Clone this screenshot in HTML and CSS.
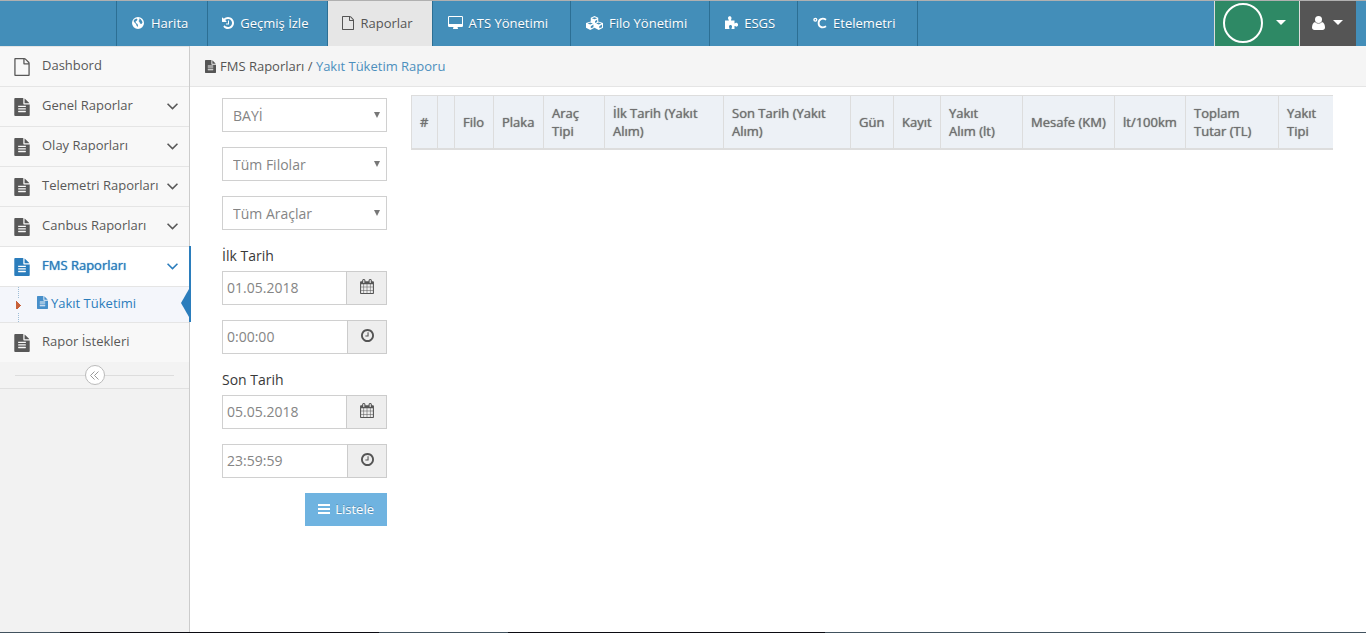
FILE: index.html
```html
<!DOCTYPE html>
<html lang="tr">
<head>
<meta charset="utf-8">
<title>Yakıt Tüketim Raporu</title>
<link rel="stylesheet" href="styles.css">
</head>
<body>
<svg class="sprite" aria-hidden="true">
  <symbol id="file-o" viewBox="128 0 1536 1792"><path d="M1596 380q28 28 48 76t20 88v1152q0 40-28 68t-68 28h-1344q-40 0-68-28t-28-68v-1600q0-40 28-68t68-28h896q40 0 88 20t76 48zm-444-244v376h376q-10-29-22-41l-313-313q-12-12-41-22zm384 1528v-1024h-416q-40 0-68-28t-28-68v-416h-768v1536h1280z"/></symbol>
  <symbol id="file" viewBox="128 0 1536 1792"><path d="M1596 476q14 14 28 36h-472v-472q22 14 36 28zm-476 164h544v1056q0 40-28 68t-68 28h-1344q-40 0-68-28t-28-68v-1600q0-40 28-68t68-28h800v544q0 40 28 68t68 28zm160 736v-64q0-14-9-23t-23-9h-704q-14 0-23 9t-9 23v64q0 14 9 23t23 9h704q14 0 23-9t9-23zm0-256v-64q0-14-9-23t-23-9h-704q-14 0-23 9t-9 23v64q0 14 9 23t23 9h704q14 0 23-9t9-23zm0-256v-64q0-14-9-23t-23-9h-704q-14 0-23 9t-9 23v64q0 14 9 23t23 9h704q14 0 23-9t9-23z"/></symbol>
  <symbol id="calendar" viewBox="64 0 1664 1792"><path d="M192 1664h288v-288h-288v288zm352 0h320v-288h-320v288zm-352-352h288v-320h-288v320zm352 0h320v-320h-320v320zm-352-384h288v-288h-288v288zm736 736h320v-288h-320v288zm-384-736h320v-288h-320v288zm768 736h288v-288h-288v288zm-384-352h320v-320h-320v320zm-352-864v-288q0-13-9.500-22.500t-22.500-9.500h-64q-13 0-22.500 9.500t-9.500 22.500v288q0 13 9.500 22.500t22.500 9.500h64q13 0 22.500-9.500t9.500-22.500zm736 864h288v-320h-288v320zm-384-384h320v-288h-320v288zm384 0h288v-288h-288v288zm32-480v-288q0-13-9.500-22.500t-22.500-9.500h-64q-13 0-22.500 9.500t-9.500 22.500v288q0 13 9.500 22.500t22.500 9.500h64q13 0 22.500-9.500t9.500-22.500zm384-64v1280q0 52-38 90t-90 38h-1408q-52 0-90-38t-38-90v-1280q0-52 38-90t90-38h128v-96q0-66 47-113t113-47h64q66 0 113 47t47 113v96h384v-96q0-66 47-113t113-47h64q66 0 113 47t47 113v96h128q52 0 90 38t38 90z"/></symbol>
  <symbol id="clock" viewBox="128 128 1536 1536"><path d="M1024 544v448q0 14-9 23t-23 9h-320q-14 0-23-9t-9-23v-64q0-14 9-23t23-9h224v-352q0-14 9-23t23-9h64q14 0 23 9t9 23zm416 352q0-148-73-273t-198-198-273-73-273 73-198 198-73 273 73 273 198 198 273 73 273-73 198-198 73-273zm224 0q0 209-103 385.500t-279.500 279.500-385.500 103-385.500-103-279.500-279.500-103-385.500 103-385.500 279.500-279.500 385.500-103 385.500 103 279.500 279.500 103 385.500z"/></symbol>
  <symbol id="history" viewBox="128 128 1536 1536"><path d="M1664 896q0 156-61 298t-164 245-245 164-298 61q-172 0-327-72.500t-264-204.500q-7-10-6.500-22.500t8.500-20.500l137-138q10-9 25-9 16 2 23 12 73 95 179 147t225 52q104 0 198.500-40.500t163.500-109.500 109.500-163.500 40.500-198.500-40.500-198.500-109.500-163.500-163.500-109.500-198.500-40.500q-98 0-188 35.500t-160 101.500l137 138q31 30 14 69-17 40-59 40h-448q-26 0-45-19t-19-45v-448q0-42 40-59 39-17 69 14l130 129q107-101 244.500-156.500t284.500-55.500q156 0 298 61t245 164 164 245 61 298zm-640-288v448q0 14-9 23t-23 9h-320q-14 0-23-9t-9-23v-64q0-14 9-23t23-9h224v-352q0-14 9-23t23-9h64q14 0 23 9t9 23z"/></symbol>
  <symbol id="desktop" viewBox="-64 0 1920 1664"><path d="M1728 992v-832q0-32-32-32h-1600q-32 0-32 32v832q0 32 32 32h1600q32 0 32-32zm128-832v1088q0 160-160 160h-544q0 37 16 77t32 71 16 44q0 64-64 64h-512q-64 0-64-64 0-14 16-44t32-70 16-78h-544q-160 0-160-160v-1088q0-160 160-160h1600q160 0 160 160z"/></symbol>
  <symbol id="globe" viewBox="0 0 24 24"><path fill-rule="evenodd" d="M12 0a12 12 0 1 0 0 24a12 12 0 1 0 0-24zM14 3l3 1 3 4 1 3-2 3-3-1-1-3-2-2 2-2zM5 5l4-2 2 2-2 3-2 1 1 3 3 2 1 3-1 3-2-3-1-3-3-3-2-3z"/></symbol>
  <symbol id="cubes" viewBox="0 0 32 26"><path fill-rule="evenodd" d="M16 0l7 3v7l9 3v9l-8 4-8-4-8 4-8-4v-9l9-3V3zM11 4l5 2 5-2-5-2zM17 9v4l4-2V7zM3 14l5 2 5-2-5-2zM9 19v4l5-2v-5zM19 14l5 2 5-2-5-2zM25 19v4l5-2v-5z"/></symbol>
  <symbol id="puzzle" viewBox="0 0 26 26"><path d="M0 9h8C7 7 6 6 6 4c0-5 7-5 7 0 0 2-1 3-1 5h7v6c2 0 3-2 5-1 3 1 3 6 0 7-2 1-3-1-5-1v6h-6c0-2 1-3 1-5 0-4-6-4-6 0 0 2 1 3 1 5H0z"/></symbol>
  <symbol id="celsius" viewBox="0 0 30 24"><circle cx="5" cy="5" r="3" fill="none" stroke="currentColor" stroke-width="3"/><path d="M28 5C20 0 12 4 12 12s7 12 16 7" fill="none" stroke="currentColor" stroke-width="4"/></symbol>
  <symbol id="user" viewBox="0 0 26 28"><path d="M6 12c-4 1-6 6-6 11 0 3 2 5 5 5h16c3 0 5-2 5-5 0-5-2-10-6-11-4 4-10 4-14 0z"/><circle cx="13" cy="7" r="7"/></symbol>
  <symbol id="bars" viewBox="0 0 12 10"><path d="M0 0h12v2H0zM0 4h12v2H0zM0 8h12v2H0z"/></symbol>
  <symbol id="down" viewBox="0 0 10 6"><path d="M0 1l5 5 5-5-1-1-4 4-4-4z"/></symbol>
  <symbol id="caret" viewBox="0 0 10 5"><path d="M0 0h10l-5 5z"/></symbol>
</svg>

<header class="navbar">
  <nav class="tabs">
    <a class="tab mid" href="#"><svg class="icon i12"><use href="#globe"/></svg>Harita</a>
    <a class="tab" href="#"><svg class="icon i12"><use href="#history"/></svg>Geçmiş İzle</a>
    <a class="tab active" href="#"><svg class="icon i12 tall"><use href="#file-o"/></svg>Raporlar</a>
    <a class="tab roomy" href="#"><svg class="icon i15"><use href="#desktop"/></svg>ATS Yönetimi</a>
    <a class="tab roomy" href="#"><svg class="icon i16"><use href="#cubes"/></svg>Filo Yönetimi</a>
    <a class="tab roomy" href="#"><svg class="icon i13"><use href="#puzzle"/></svg>ESGS</a>
    <a class="tab roomy" href="#"><svg class="icon i14"><use href="#celsius"/></svg>Etelemetri</a>
  </nav>
  <div class="account">
    <button class="acct green" type="button" aria-label="Firma"><span class="avatar"></span><svg class="caret"><use href="#caret"/></svg></button>
    <button class="acct dark" type="button" aria-label="Kullanıcı"><svg class="user"><use href="#user"/></svg><svg class="caret"><use href="#caret"/></svg></button>
  </div>
</header>

<div class="page">
  <aside class="sidebar">
    <ul class="menu">
      <li><a class="item" href="#"><svg class="doc"><use href="#file-o"/></svg><span class="name">Dashbord</span></a></li>
      <li><a class="item" href="#"><svg class="doc"><use href="#file"/></svg><span class="name">Genel Raporlar</span><svg class="chev"><use href="#down"/></svg></a></li>
      <li><a class="item" href="#"><svg class="doc"><use href="#file"/></svg><span class="name">Olay Raporları</span><svg class="chev"><use href="#down"/></svg></a></li>
      <li><a class="item" href="#"><svg class="doc"><use href="#file"/></svg><span class="name">Telemetri Raporları</span><svg class="chev"><use href="#down"/></svg></a></li>
      <li><a class="item" href="#"><svg class="doc"><use href="#file"/></svg><span class="name">Canbus Raporları</span><svg class="chev"><use href="#down"/></svg></a></li>
      <li class="open"><a class="item" href="#"><svg class="doc"><use href="#file"/></svg><span class="name">FMS Raporları</span><svg class="chev"><use href="#down"/></svg></a>
        <a class="subitem" href="#"><svg class="subdoc"><use href="#file"/></svg>Yakıt Tüketimi</a></li>
      <li><a class="item" href="#"><svg class="doc"><use href="#file"/></svg><span class="name">Rapor İstekleri</span></a></li>
    </ul>
    <div class="collapse"><button class="toggle" type="button" aria-label="Menüyü daralt"><svg class="dbl" viewBox="0 0 9 9"><path d="M4 0L0 4l4 4M8 0L4 4l4 4" transform="translate(.5 .5)"/></svg></button></div>
  </aside>

  <main class="main">
    <div class="crumbs"><svg class="crumbdoc"><use href="#file"/></svg><span>FMS Raporları / <a href="#">Yakıt Tüketim Raporu</a></span></div>
    <div class="content">
      <form class="filters">
        <div class="pick"><select aria-label="Bayi"><option>BAYİ</option></select></div>
        <div class="pick"><select aria-label="Filo"><option>Tüm Filolar</option></select></div>
        <div class="pick"><select aria-label="Araç"><option>Tüm Araçlar</option></select></div>
        <div class="when">
          <label for="d1">İlk Tarih</label>
          <div class="group"><input id="d1" type="text" value="01.05.2018"><button class="addon wide" type="button" aria-label="Takvim"><svg class="cal"><use href="#calendar"/></svg></button></div>
        </div>
        <div class="group"><input type="text" aria-label="İlk saat" value="0:00:00"><button class="addon" type="button" aria-label="Saat"><svg class="clk"><use href="#clock"/></svg></button></div>
        <div class="when">
          <label for="d2">Son Tarih</label>
          <div class="group"><input id="d2" type="text" value="05.05.2018"><button class="addon wide" type="button" aria-label="Takvim"><svg class="cal"><use href="#calendar"/></svg></button></div>
        </div>
        <div class="group"><input type="text" aria-label="Son saat" value="23:59:59"><button class="addon" type="button" aria-label="Saat"><svg class="clk"><use href="#clock"/></svg></button></div>
        <button class="list" type="button"><svg class="bars"><use href="#bars"/></svg>Listele</button>
      </form>
      <div class="results">
        <table>
          <colgroup><col class="w26"><col class="w17"><col class="w39"><col class="w50"><col class="w61"><col class="w119"><col class="w127"><col class="w43"><col class="w47"><col class="w82"><col class="w92"><col class="w71"><col class="w93"><col></colgroup>
          <thead><tr><th>#</th><th></th><th>Filo</th><th>Plaka</th><th>Araç Tipi</th><th>İlk Tarih (Yakıt Alım)</th><th>Son Tarih (Yakıt Alım)</th><th>Gün</th><th>Kayıt</th><th>Yakıt<br>Alım (lt)</th><th>Mesafe (KM)</th><th>lt/100km</th><th>Toplam<br>Tutar (TL)</th><th>Yakıt Tipi</th></tr></thead>
        </table>
      </div>
    </div>
  </main>
</div>
<div class="edge"></div>
</body>
</html>
```
FILE: styles.css
```css
* { box-sizing: border-box; }
body {
  margin: 0;
  min-height: 100vh;
  display: flex;
  flex-direction: column;
  background: #fff;
  color: #393939;
  font: 13px/20px "Open Sans", sans-serif;
}
a { color: inherit; text-decoration: none; }
svg { fill: currentColor; flex: none; display: block; }
button, input, select { font-family: inherit; border-radius: 0; margin: 0; }
.sprite { position: absolute; width: 0; height: 0; }

.navbar {
  display: flex;
  justify-content: space-between;
  height: 46px;
  border-top: 1px solid #b0b0b0;
  background: #438eb9;
  color: #fff;
  padding: 0 10px 0 116px;
}
.tabs { display: flex; }
.tab {
  display: flex;
  align-items: center;
  gap: 6px;
  padding: 0 19px 2px 14px;
  border-left: 1px solid #2c6f94;
  text-shadow: 0 1px 0 rgba(0, 0, 0, .25);
  white-space: nowrap;
}
.tab.mid { gap: 7px; padding-left: 15px; }
.tab.roomy { padding-left: 15px; padding-right: 22px; }
.tab:last-child { border-right: 1px solid #2c6f94; }
.tab.active { background: #e6e6e6; color: #555; text-shadow: none; }
.icon { height: 12px; }
.i12 { width: 12px; }
.i13 { width: 13px; height: 13px; }
.i14 { width: 14px; height: 12px; }
.i15 { width: 15px; height: 13px; }
.i16 { width: 17px; height: 14px; }
.icon.tall { height: 14px; }
.account { display: flex; }
.acct {
  display: flex;
  align-items: center;
  border: 0;
  border-left: 1px solid #ddd;
  padding: 0 0 2px;
  color: #fff;
}
.green { width: 85px; background: #2e8965; gap: 13px; padding-left: 8px; }
.dark { width: 57px; background: #555; gap: 8px; padding-left: 12px; }
.avatar { width: 40px; height: 40px; border: 2px solid #fff; border-radius: 50%; }
.caret { width: 10px; height: 5px; }
.user { width: 13px; height: 14px; }

.page { flex: 1; display: flex; }
.sidebar {
  width: 190px;
  flex: none;
  border-right: 1px solid #ccc;
  background: #f2f2f2;
}
.menu { list-style: none; margin: 0; padding: 0; }
.item {
  display: flex;
  align-items: center;
  height: 40px;
  padding: 0 11px 0 14px;
  border-top: 1px solid #e5e5e5;
  background: #f8f8f8;
  color: #585858;
  white-space: nowrap;
}
.name { flex: 1; margin-left: 12px; padding-bottom: 4px; }
.doc { width: 16px; height: 18px; }
.chev { width: 11px; height: 7px; }
.open { position: relative; color: #2b7dbc; }
.open::after {
  content: "";
  position: absolute;
  top: 0;
  bottom: 0;
  right: -2px;
  width: 2px;
  background: #2b7dbc;
}
.open .item { background: #fff; color: #2b7dbc; }
.open .name { text-shadow: 0 0 1px #2b7dbc; }
.subitem {
  position: relative;
  display: flex;
  align-items: center;
  gap: 3px;
  height: 36px;
  padding: 0 0 4px 37px;
  border-top: 1px solid #e5e5e5;
  background: #f4f6fb;
}
.subitem::before {
  content: "";
  position: absolute;
  left: 16px;
  top: 0;
  bottom: 0;
  width: 5px;
  background:
    conic-gradient(from 225deg at 100% 50%, #c86139 90deg, transparent 0) center / 5px 8px no-repeat,
    linear-gradient(#f4f6fb, #f4f6fb) center / 5px 14px no-repeat,
    repeating-linear-gradient(#9dbdd6 0 1px, transparent 1px 2px) 2px 0 / 1px 100% no-repeat;
}
.subitem::after {
  content: "";
  position: absolute;
  right: 0;
  top: 2px;
  width: 8px;
  height: 28px;
  background: #2b7dbc;
  clip-path: polygon(100% 0, 0 50%, 100% 100%);
}
.subdoc { width: 11px; height: 13px; color: #478fca; }
.collapse {
  display: flex;
  justify-content: center;
  height: 27px;
  padding-top: 3px;
  border-bottom: 1px solid #e0e0e0;
  background: linear-gradient(#ddd, #ddd) 15px 13px / 159px 1px no-repeat, #f3f3f3;
}
.toggle {
  width: 20px;
  height: 20px;
  padding: 0;
  border: 1px solid #bbb;
  border-radius: 50%;
  background: #fff;
  display: grid;
  place-items: center;
}
.dbl { width: 9px; height: 9px; fill: none; stroke: #999; }

.main { flex: 1; min-width: 0; }
.crumbs {
  display: flex;
  align-items: center;
  gap: 4px;
  height: 41px;
  padding-left: 15px;
  border-bottom: 1px solid #e5e5e5;
  background: #f5f5f5;
  color: #555;
}
.crumbs a { color: #4c8fbd; }
.crumbdoc { width: 11px; height: 13px; }
.content { display: flex; gap: 24px; padding: 8px 33px 8px 32px; }
.filters {
  width: 165px;
  flex: none;
  display: flex;
  flex-direction: column;
  gap: 15px;
  padding-top: 3px;
  font-size: 14px;
}
.pick { position: relative; height: 34px; }
.pick::after {
  content: "";
  position: absolute;
  right: 7px;
  top: 14px;
  width: 6px;
  height: 6px;
  background: #777;
  clip-path: polygon(0 0, 100% 0, 50% 100%);
  pointer-events: none;
}
select {
  appearance: none;
  width: 100%;
  height: 34px;
  padding: 1px 10px 0;
  border: 1px solid #d0d0d0;
  background: #fff;
  color: #858585;
  font-size: 14px;
}
.when { display: flex; flex-direction: column; gap: 5px; padding-top: 1px; }
.group { display: flex; height: 34px; }
input {
  flex: 1;
  min-width: 0;
  padding: 0 4px 2px;
  border: 1px solid #d0d0d0;
  border-right: 0;
  background: #fff;
  color: #858585;
  font-size: 14px;
}
.addon {
  width: 40px;
  padding: 0 0 3px;
  border: 1px solid #ccc;
  background: #eee;
  color: #555;
  display: grid;
  place-items: center;
}
.addon.wide { width: 41px; }
.cal { width: 14px; height: 15px; }
.clk { width: 13px; height: 13px; }
.list {
  align-self: flex-end;
  display: flex;
  align-items: center;
  gap: 5px;
  height: 33px;
  padding: 0 13px 1px;
  border: 0;
  background: #6fb3e0;
  color: #fff;
  font-size: 13px;
  text-shadow: 0 -1px 0 rgba(0, 0, 0, .25);
}
.bars { width: 12px; height: 10px; }

.results { flex: 1; min-width: 0; }
table {
  width: 100%;
  table-layout: fixed;
  border-collapse: separate;
  border-spacing: 0;
  color: #707070;
}
th {
  height: 55px;
  padding: 0 7px 0 8px;
  border: solid #ddd;
  border-width: 1px 0 2px 1px;
  background: #edf1f6;
  font-weight: 400;
  line-height: 18px;
  text-align: left;
  text-shadow: 0 0 1px #707070;
}
.w17 { width: 17px; }
.w26 { width: 26px; }
.w39 { width: 39px; }
.w43 { width: 43px; }
.w47 { width: 47px; }
.w50 { width: 50px; }
.w61 { width: 61px; }
.w71 { width: 71px; }
.w82 { width: 82px; }
.w92 { width: 92px; }
.w93 { width: 93px; }
.w119 { width: 119px; }
.w127 { width: 127px; }

.edge {
  height: 1px;
  background: linear-gradient(90deg, #41525e 60px, #0b0b12 60px 379px, #41525e 379px 508px, #0b0b12 508px 825px, #41525e 825px);
}
```
